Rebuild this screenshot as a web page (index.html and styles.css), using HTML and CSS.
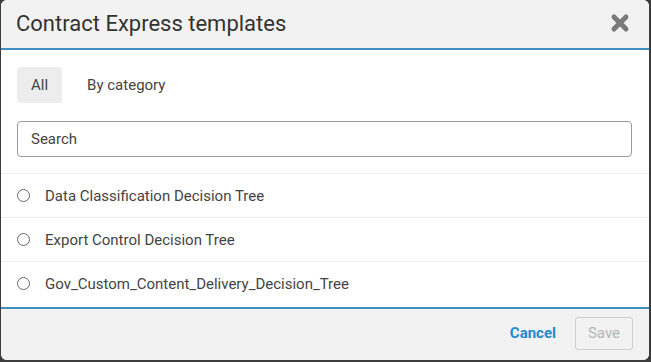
FILE: index.html
```html
<!DOCTYPE html>
<html lang="en">

<head>
    <meta charset="UTF-8">
    <title>Contract Express templates</title>
    <link rel="stylesheet" href="styles.css">
</head>

<body>
    <div class="dialog">
        <div class="dialog-header">
            <div class="dialog-title">Contract Express templates</div>
            <button class="close-button" aria-label="Close">
                <svg width="20" height="20" viewBox="0 0 20 20">
                    <path d="M4 4 L16 16 M16 4 L4 16" stroke="#7a7a7a" stroke-width="5" stroke-linecap="round" />
                </svg>
            </button>
        </div>
        <div class="dialog-body">
            <div class="tabs">
                <button class="tab active">All</button>
                <button class="tab">By category</button>
            </div>
            <div class="search-row">
                <input class="search-field" type="text" placeholder="Search">
            </div>
            <ul class="template-list">
                <li class="template-item"><span class="radio"></span>Data Classification Decision Tree</li>
                <li class="template-item"><span class="radio"></span>Export Control Decision Tree</li>
                <li class="template-item"><span class="radio"></span>Gov_Custom_Content_Delivery_Decision_Tree</li>
            </ul>
        </div>
        <div class="dialog-footer">
            <button class="cancel-button">Cancel</button>
            <button class="save-button" disabled>Save</button>
        </div>
    </div>
</body>

</html>
```

FILE: styles.css
```css
body {
    margin: 0;
    background: #3c3c3c;
    font-family: Roboto, "Liberation Sans", sans-serif;
    color: #444;
}

.dialog {
    margin: 0 2px 2px 1px;
    height: 360px;
    background: #fff;
    border-radius: 6px;
    overflow: hidden;
    display: flex;
    flex-direction: column;
}

.dialog-header {
    height: 48px;
    background: #f2f2f2;
    border-bottom: 2px solid #3c8fc0;
    display: flex;
    align-items: center;
    justify-content: space-between;
    padding: 0 19px 0 15px;
}

.dialog-title {
    font-size: 22px;
    color: #333;
    padding-bottom: 2px;
}

.close-button {
    border: none;
    background: none;
    padding: 0;
    display: flex;
    margin-top: -2px;
}

.dialog-body {
    flex: 1;
}

.tabs {
    display: flex;
    gap: 11px;
    padding: 17px 16px 0;
}

.tab {
    font-family: Roboto, "Liberation Sans", sans-serif;
    font-size: 15px;
    color: #444;
    background: none;
    border: none;
    border-radius: 3px;
    height: 36px;
    padding: 0 14px;
}

.tab.active {
    background: #ededed;
}

.search-row {
    padding: 18px 17px 16px 16px;
    border-bottom: 1px solid #ececec;
}

.search-field {
    box-sizing: border-box;
    width: 100%;
    height: 36px;
    border: 1px solid #9a9a9a;
    border-radius: 4px;
    padding: 0 13px;
    font-family: Roboto, "Liberation Sans", sans-serif;
    font-size: 15px;
}

.search-field::placeholder {
    color: #444;
}

.template-list {
    list-style: none;
    margin: 0;
    padding: 0;
}

.template-item {
    height: 43px;
    display: flex;
    align-items: center;
    padding-left: 16px;
    font-size: 15px;
    color: #444;
    border-bottom: 1px solid #ececec;
}

.template-item:last-child {
    border-bottom: none;
}

.radio {
    width: 11px;
    height: 11px;
    border: 1px solid #666;
    border-radius: 50%;
    margin-right: 15px;
}

.dialog-footer {
    height: 53px;
    background: #f2f2f2;
    border-top: 2px solid #3c8fc0;
    display: flex;
    align-items: center;
    justify-content: flex-end;
    padding: 0 16px 3px 0;
    box-sizing: border-box;
}

.cancel-button {
    font-family: Roboto, "Liberation Sans", sans-serif;
    font-size: 15px;
    font-weight: bold;
    color: #1b8ad3;
    background: none;
    border: none;
    padding: 0;
    margin-right: 19px;
}

.save-button {
    font-family: Roboto, "Liberation Sans", sans-serif;
    font-size: 15px;
    color: #b5b5b5;
    background: none;
    border: 1px solid #cfcfcf;
    border-radius: 3px;
    width: 58px;
    height: 33px;
}
```
